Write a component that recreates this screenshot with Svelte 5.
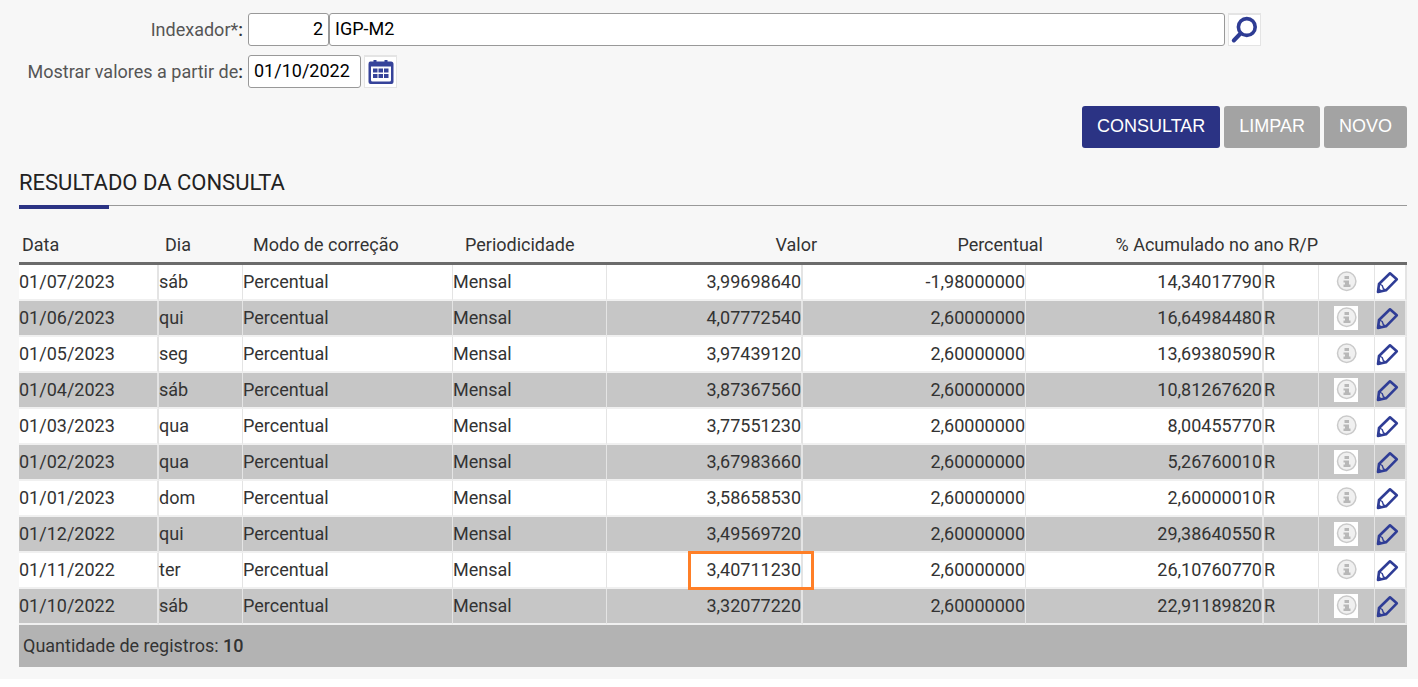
<script lang="ts">
    let code = $state("2");
    let name = $state("IGP-M2");
    let startDate = $state("01/10/2022");

    const highlighted = "01/11/2022";

    const rows = [
        { date: "01/07/2023", day: "sáb", value: "3,99698640", percent: "-1,98000000", total: "14,34017790" },
        { date: "01/06/2023", day: "qui", value: "4,07772540", percent: "2,60000000", total: "16,64984480" },
        { date: "01/05/2023", day: "seg", value: "3,97439120", percent: "2,60000000", total: "13,69380590" },
        { date: "01/04/2023", day: "sáb", value: "3,87367560", percent: "2,60000000", total: "10,81267620" },
        { date: "01/03/2023", day: "qua", value: "3,77551230", percent: "2,60000000", total: "8,00455770" },
        { date: "01/02/2023", day: "qua", value: "3,67983660", percent: "2,60000000", total: "5,26760010" },
        { date: "01/01/2023", day: "dom", value: "3,58658530", percent: "2,60000000", total: "2,60000010" },
        { date: "01/12/2022", day: "qui", value: "3,49569720", percent: "2,60000000", total: "29,38640550" },
        { date: "01/11/2022", day: "ter", value: "3,40711230", percent: "2,60000000", total: "26,10760770" },
        { date: "01/10/2022", day: "sáb", value: "3,32077220", percent: "2,60000000", total: "22,91189820" }
    ];
</script>

<main>
    <form onsubmit={(e) => e.preventDefault()}>
        <div class="field">
            <label for="code">Indexador*<b>:</b></label>
            <input id="code" class="code" type="text" bind:value={code} />
            <input class="name" type="text" aria-label="Nome do indexador" bind:value={name} />
            <button type="button" class="iconButton" aria-label="Pesquisar">
                <svg width="31" height="30" viewBox="0 0 31 30" fill="none" stroke="#2e3c94">
                    <circle cx="17.8" cy="12" r="8.4" stroke-width="3.6" />
                    <path d="M11.5 18.5 4.8 25.5" stroke-width="4" stroke-linecap="round" />
                </svg>
            </button>
        </div>
        <div class="field">
            <label for="startDate">Mostrar valores a partir de<b>:</b></label>
            <input id="startDate" class="date" type="text" bind:value={startDate} />
            <button type="button" class="iconButton" aria-label="Abrir calendário">
                <svg width="31" height="30" viewBox="0 0 31 30" fill="#36439a">
                    <path fill-rule="evenodd" d="M5 4.500h3.500V3h3v1.500h8V3h3v1.500H26q2.500 0 2.500 2.500v18q0 2-2 2h-21q-2 0-2-2V7Q3.500 4.500 5 4.500zM6 9.500V23q0 1.500 1.500 1.500h17q1.500 0 1.500-1.500V9.500z" />
                    <path d="M8 11.500h4.500v4H8zM13.500 11.500H18v4h-4.500zM19 11.500h4.500v4H19zM8 17h4.500v4H8zM13.500 17H18v4h-4.500zM19 17h4.500v4H19z" />
                </svg>
            </button>
        </div>
        <div class="actions">
            <button type="submit" class="primary">CONSULTAR</button>
            <button type="reset">LIMPAR</button>
            <button type="button">NOVO</button>
        </div>
    </form>

    <h2>RESULTADO DA CONSULTA</h2>

    <!-- the heading has its own column widths, so it is a separate table -->
    <table class="head">
        <colgroup>
            <col style:width="143px" /><col style:width="88px" /><col style:width="212px" /><col style:width="156px" />
            <col style:width="202px" /><col style:width="226px" /><col style:width="275px" /><col style:width="86px" />
        </colgroup>
        <thead>
            <tr>
                <th>Data</th>
                <th>Dia</th>
                <th>Modo de correção</th>
                <th>Periodicidade</th>
                <th class="number">Valor</th>
                <th class="number">Percentual</th>
                <th class="number">% Acumulado no ano R/P</th>
                <td></td>
            </tr>
        </thead>
    </table>

    <table class="results" aria-label="Resultado da consulta">
        <colgroup>
            <col style:width="140px" /><col style:width="84px" /><col style:width="210px" /><col style:width="154px" />
            <col style:width="196px" /><col style:width="223px" /><col style:width="238px" /><col style:width="55px" />
            <col style:width="56px" /><col style:width="32px" />
        </colgroup>
        <tbody>
            {#each rows as row}
                <tr>
                    <td class="wide">{row.date}</td>
                    <td>{row.day}</td>
                    <td>Percentual</td>
                    <td>Mensal</td>
                    <td class="number wide">
                        <span class:highlight={row.date === highlighted}>{row.value}</span>
                    </td>
                    <td class="number">{row.percent}</td>
                    <td class="number wide">{row.total}</td>
                    <td>R</td>
                    <td class="info">
                        <button type="button" aria-label="Informações de {row.date}">
                            <svg width="24" height="24" viewBox="0 0 24 24">
                                <circle cx="12.7" cy="11.3" r="9.2" fill="#f0f0f0" stroke="#cacaca" stroke-width="1.5" />
                                <path d="M10.500 6H15v3h-4.500zM9.500 10.500H15V14.500h1.500V17h-7v-2.500H11v-2H9.500z" fill="#b8b8b8" />
                            </svg>
                        </button>
                    </td>
                    <td class="edit wide">
                        <button type="button" aria-label="Editar {row.date}">
                            <svg width="24" height="24" viewBox="0 0 24 24" fill="none" stroke="#2f3d96" stroke-width="2.6" stroke-linejoin="round">
                                <path d="M4 14 15 3.300 21.800 9.300 11 20.300 3 22z" />
                                <path d="M4.500 14 7.200 15.500 8.500 19 11 20" stroke-width="1.4" />
                                <path d="M2 23 3 17.500 8 21.500z" fill="#2f3d96" stroke="none" />
                            </svg>
                        </button>
                    </td>
                </tr>
            {/each}
        </tbody>
    </table>

    <footer>Quantidade de registros: <strong>{rows.length}</strong></footer>
</main>

<style>
    :global(body) {
        margin: 0;
        background-color: white;
    }

    main {
        box-sizing: border-box;
        padding: 13px 11px 12px 19px;
        background-color: #f7f7f7;
        color: #333;
        font-family: Roboto, "Liberation Sans", sans-serif;
        font-size: 18px;
        line-height: 22px;
    }

    .field {
        display: flex;
        align-items: center;
        height: 33px;
        margin-bottom: 9px;
        padding-right: 146px;
    }

    label {
        flex: none;
        width: 224px;
        margin-right: 5px;
        color: #555;
        text-align: right;
        white-space: nowrap;
    }

    label b {
        color: #333;
        font-weight: 500;
    }

    input {
        box-sizing: border-box;
        height: 33px;
        padding: 0 5px 2px;
        border: 1px solid #999;
        border-radius: 3px;
        background-color: white;
        color: black;
        font: inherit;
    }

    .code {
        width: 81px;
        text-align: right;
    }

    .name {
        flex: 1;
        min-width: 0;
    }

    .date {
        width: 113px;
    }

    button {
        padding: 0;
        border: none;
        background: none;
        cursor: pointer;
    }

    svg {
        display: block;
    }

    .iconButton {
        flex: none;
        box-sizing: border-box;
        width: 33px;
        height: 33px;
        margin-left: 3px;
        border: 1px solid #e4e4e4;
        border-top-width: 2px;
        background-color: white;
    }

    .actions {
        display: flex;
        justify-content: flex-end;
        gap: 4px;
        padding-top: 9px;
    }

    .actions button {
        height: 42px;
        padding: 0 15px 2px;
        border-radius: 3px;
        background-color: #a3a3a3;
        color: white;
        font-family: "Liberation Sans", Arial, sans-serif;
        font-size: 18px;
    }

    .actions .primary {
        background-color: #2b3384;
    }

    h2 {
        margin: 20px 0 0;
        padding-bottom: 8px;
        border-bottom: 1px solid #999;
        color: #222;
        font-size: 22px;
        font-weight: 400;
        line-height: 29px;
    }

    h2::after {
        content: "";
        display: block;
        position: absolute;
        width: 90px;
        height: 4px;
        margin-top: 8px;
        background-color: #2b3384;
    }

    table {
        width: 100%;
        border-spacing: 0;
        table-layout: fixed;
    }

    .head {
        margin-top: 20px;
        border-bottom: 3px solid #6b6b6b;
    }

    th {
        height: 34px;
        padding: 2px 3px 0;
        font-weight: 400;
        text-align: left;
        white-space: nowrap;
    }

    .results td {
        height: 34px;
        padding: 0;
        border-right: 1px solid #e4e4e4;
        border-bottom: 2px solid #f0f0f0;
    }

    .results td.wide {
        border-right-width: 2px;
    }

    tbody tr {
        background-color: white;
    }

    tbody tr:nth-child(even) {
        background-color: #c6c6c6;
    }

    .number {
        text-align: right;
    }

    .highlight {
        position: relative;
    }

    .highlight::after {
        content: "";
        position: absolute;
        inset: -8px -13px -10px -18px;
        border: 3px solid #ff7f27;
    }

    .info button {
        display: block;
        margin: 0 auto;
        background-color: white;
    }

    .results .info {
        padding-right: 2px;
    }

    .edit button {
        display: block;
    }

    footer {
        padding: 10px 4px;
        background-color: #b3b3b3;
    }

    strong {
        font-weight: 500;
    }
</style>
